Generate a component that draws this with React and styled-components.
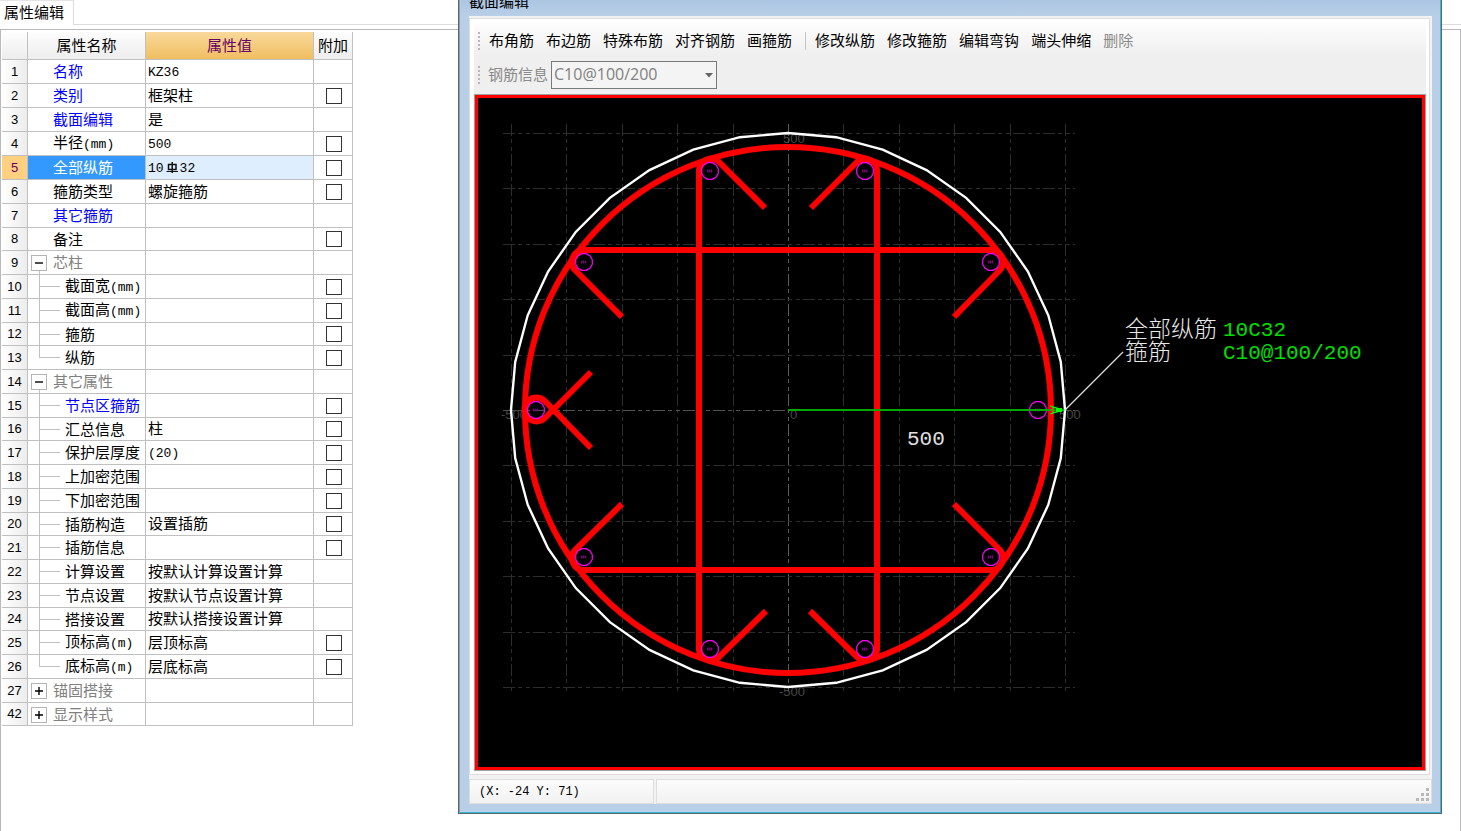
import React, { useState } from 'react';
import styled, { createGlobalStyle, css } from 'styled-components';

const rows = [
  { no: 1, name: '名称', value: 'KZ36', tone: 'link' },
  { no: 2, name: '类别', value: '框架柱', tone: 'link', check: true },
  { no: 3, name: '截面编辑', value: '是', tone: 'link' },
  { no: 4, name: '半径', unit: '(mm)', value: '500', check: true },
  { no: 5, name: '全部纵筋', rebar: ['10', '32'], check: true, selected: true },
  { no: 6, name: '箍筋类型', value: '螺旋箍筋', check: true },
  { no: 7, name: '其它箍筋', tone: 'link' },
  { no: 8, name: '备注', check: true },
  { no: 9, name: '芯柱', tone: 'group', open: true },
  { no: 10, name: '截面宽', unit: '(mm)', branch: 'mid', check: true },
  { no: 11, name: '截面高', unit: '(mm)', branch: 'mid', check: true },
  { no: 12, name: '箍筋', branch: 'mid', check: true },
  { no: 13, name: '纵筋', branch: 'last', check: true },
  { no: 14, name: '其它属性', tone: 'group', open: true },
  { no: 15, name: '节点区箍筋', tone: 'link', branch: 'mid', check: true },
  { no: 16, name: '汇总信息', value: '柱', branch: 'mid', check: true },
  { no: 17, name: '保护层厚度', value: '(20)', branch: 'mid', check: true },
  { no: 18, name: '上加密范围', branch: 'mid', check: true },
  { no: 19, name: '下加密范围', branch: 'mid', check: true },
  { no: 20, name: '插筋构造', value: '设置插筋', branch: 'mid', check: true },
  { no: 21, name: '插筋信息', branch: 'mid', check: true },
  { no: 22, name: '计算设置', value: '按默认计算设置计算', branch: 'mid' },
  { no: 23, name: '节点设置', value: '按默认节点设置计算', branch: 'mid' },
  { no: 24, name: '搭接设置', value: '按默认搭接设置计算', branch: 'mid' },
  { no: 25, name: '顶标高', unit: '(m)', value: '层顶标高', branch: 'mid', check: true },
  { no: 26, name: '底标高', unit: '(m)', value: '层底标高', branch: 'last', check: true },
  { no: 27, name: '锚固搭接', tone: 'group', open: false },
  { no: 42, name: '显示样式', tone: 'group', open: false },
];

const drawTools = ['布角筋', '布边筋', '特殊布筋', '对齐钢筋', '画箍筋'];
const editTools = ['修改纵筋', '修改箍筋', '编辑弯钩', '端头伸缩'];

// section geometry, origin at the column centre
const GRID = [-277, -222, -166, -111, -55, 0, 55, 111, 166, 222, 277];
const BARS = [
  [-78, -239], [77, -239], [-204, -148], [203, -148], [-252, 0],
  [250, 0], [-204, 147], [203, 147], [-78, 239], [77, 239],
];

const ngon = (r, n, start = 0) =>
  Array.from({ length: n }, (_, i) => {
    const a = ((i * 360) / n + start) * (Math.PI / 180);
    return `${(r * Math.cos(a)).toFixed(1)},${(r * Math.sin(a)).toFixed(1)}`;
  }).join(' ');

function Section() {
  return (
    <Drawing viewBox="-310 -312 944 669" preserveAspectRatio="xMinYMin meet">
      <g stroke="#2d2d2d" strokeWidth="1" strokeDasharray="12 3 4 4 4 3" shapeRendering="crispEdges">
        {GRID.map(p => (
          <line key={'v' + p} x1={p} x2={p} y1="-286" y2="282" stroke={p === 0 ? '#5c5c5c' : undefined} />
        ))}
        {GRID.map(p => (
          <line key={'h' + p} x1="-285" x2="287" y1={p} y2={p} stroke={p === 0 ? '#505050' : undefined} />
        ))}
      </g>
      <AxisText>
        <tspan x="-5" y="-267">500</tspan>
        <tspan x="2" y="9">0</tspan>
        <tspan x="-287" y="9">-500</tspan>
        <tspan x="271" y="9">500</tspan>
        <tspan x="-9" y="286">-500</tspan>
      </AxisText>
      <polygon points={ngon(277, 36)} fill="none" stroke="#fff" strokeWidth="2.4" />
      <g fill="none" stroke="#f00" strokeWidth="6">
        <circle r="263" />
        <path d="M-23-202L-70-249A12 12 0 0 0-89-240V240A12 12 0 0 0-70 248L-22 201" />
        <path d="M23-202L70-249A12 12 0 0 1 89-240V240A12 12 0 0 1 70 248L22 201" />
        <path d="M-166-93L-213-140A12 12 0 0 1-204-160H203A12 12 0 0 1 212-140L166-93" />
        <path d="M-166 94L-213 140A12 12 0 0 0-204 160H203A12 12 0 0 0 212 140L166 94" />
        <path d="M-197-38L-243 8A12 12 0 1 1-243-9L-197 38" />
      </g>
      {BARS.map(([x, y]) => (
        <g key={x + '/' + y} transform={`translate(${x} ${y})`} fill="none">
          <polygon points={ngon(8.6, 12, 15)} stroke="#f0f" strokeWidth="1.2" />
          <path d="M-2.5-1.5v3M-.5-1.5v3M1.5-1.5v3M-2.5 0H2.5" stroke="#800080" strokeWidth="1" />
        </g>
      ))}
      <path d="M0 0H262" stroke="#00a800" strokeWidth="2" />
      <path d="M262-4L269-2M262 4L269 2M264-2H270M264 2H270M262 0H277" stroke="#0f0" strokeWidth="1.2" fill="none" />
      <path d="M268-2H274V2H268z" fill="#0f0" />
      <path d="M277 0L335-58" stroke="#ddd" strokeWidth="1.2" />
      <NoteText>
        <tspan x="337" y="-73">全部纵筋</tspan>
        <tspan x="337" y="-50">箍筋</tspan>
      </NoteText>
      <ValueText>
        <tspan x="435" y="-74">10C32</tspan>
        <tspan x="435" y="-51">C10@100/200</tspan>
      </ValueText>
      <ValueText $white x="119" y="35">500</ValueText>
    </Drawing>
  );
}

function PropertyRow({ row }) {
  const [on, setOn] = useState(false);
  const latin = row.value && /^[\x20-\x7e]+$/.test(row.value);
  const branch = row.open ? 'first' : row.branch;

  return (
    <tr>
      <RowHead scope="row" $selected={row.selected}>{row.no}</RowHead>
      <NameCell $tone={row.tone} $branch={branch} $selected={row.selected}>
        {row.tone === 'group' && (
          <Toggle type="button" aria-expanded={row.open} aria-label={row.name}>
            <svg width="14" height="14" viewBox="0 0 14 14" stroke="#000" strokeWidth="1.4">
              <path d={row.open ? 'M3 7h8' : 'M3 7h8M7 3v8'} />
            </svg>
          </Toggle>
        )}
        {row.name}
        {row.unit && <Latin>{row.unit}</Latin>}
      </NameCell>
      <ValueCell $selected={row.selected}>
        {row.rebar && (
          <Latin>
            {row.rebar[0]}
            <RebarMark viewBox="0 0 16 14" role="img" aria-label="C">
              <path d="M4.500 3.500h7.500v5h-7.500zM8.200 1v11" />
              <path d="M2.500 10.500h11.500" strokeWidth="1" />
            </RebarMark>
            {row.rebar[1]}
          </Latin>
        )}
        {latin ? <Latin>{row.value}</Latin> : row.value}
      </ValueCell>
      <CheckCell>
        {row.check && (
          <Check type="checkbox" aria-label={`附加 ${row.name}`} checked={on} onChange={() => setOn(!on)} />
        )}
      </CheckCell>
    </tr>
  );
}

export default function App() {
  return (
    <Page>
      <Global />
      <TabBar role="tablist">
        <Tab type="button" role="tab" aria-selected="true">属性编辑</Tab>
      </TabBar>
      <Panel>
        <Table>
          <colgroup>
            <Col $w={26} />
            <Col $w={118} />
            <Col $w={168} />
            <Col $w={39} />
          </colgroup>
          <thead>
            <tr>
              <Head aria-label="序号" />
              <Head scope="col">属性名称</Head>
              <Head scope="col" $active>属性值</Head>
              <Head scope="col">附加</Head>
            </tr>
          </thead>
          <tbody>
            {rows.map(row => <PropertyRow key={row.no} row={row} />)}
          </tbody>
        </Table>
      </Panel>

      <Dialog role="dialog" aria-label="截面编辑">
        <TitleBar>截面编辑</TitleBar>
        <Client>
          <Frame>
            <Toolbars>
              <Toolbar>
                <Grip />
                {drawTools.map(t => <Tool key={t} type="button">{t}</Tool>)}
                <Separator />
                {editTools.map(t => <Tool key={t} type="button">{t}</Tool>)}
                <Tool type="button" disabled>删除</Tool>
              </Toolbar>
              <Toolbar>
                <Grip />
                <Label htmlFor="rebar">钢筋信息</Label>
                <SelectWrap>
                  <Select id="rebar" disabled>
                    <option>C10@100/200</option>
                  </Select>
                  <Arrow viewBox="0 0 8 5"><path d="M0 0h8L4 4.500z" fill="#666" /></Arrow>
                </SelectWrap>
              </Toolbar>
            </Toolbars>
            <Canvas>
              <Section />
            </Canvas>
          </Frame>
          <StatusBar>
            <Status $w={185}>(X: -24 Y: 71)</Status>
            <Status>
              <SizeGrip viewBox="0 0 13 13" fill="#b8b8b8">
                <path d="M10 0h3v3h-3zM5 5h3v3h-3zM10 5h3v3h-3zM0 10h3v3h-3zM5 10h3v3h-3zM10 10h3v3h-3z" />
              </SizeGrip>
            </Status>
          </StatusBar>
        </Client>
      </Dialog>
    </Page>
  );
}

const mono = '"Liberation Mono", "Noto Sans CJK SC", monospace';
const sans = '"Liberation Sans", "Noto Sans CJK SC", sans-serif';

const Global = createGlobalStyle`
* { box-sizing: border-box; }
body { margin: 0; background: #fff; }
button, select, input { font: inherit; color: inherit; margin: 0; }
`
const Page = styled.div`
display: flex;
flex-direction: column;
position: relative;
min-height: 100vh;
overflow: hidden;
font: 15px/20px ${sans};
color: #000;
`
const TabBar = styled.div`
display: flex;
height: 25px;

&::after {
  content: "";
  flex: 1;
  border-bottom: 1px solid #dcdcdc;
}
`
const Tab = styled.button`
border: 0;
border-top: 1px solid #e4e4e4;
border-right: 1px solid #dcdcdc;
background: #fff;
padding: 0 9px 0 4px;
`
const Panel = styled.div`
flex: 1;
margin-top: 4px;
padding: 2px 1px;
border: 1px solid #b8b8be;
border-bottom: 0;
`
const Table = styled.table`
table-layout: fixed;
width: 351px;
border-collapse: separate;
border-spacing: 0;

th, td {
  border: 0 solid #c0c0c0;
  border-width: 0 1px 1px 0;
  font-weight: normal;
  white-space: nowrap;
}
tbody tr { height: 24px; }
tbody tr:nth-child(4n) { height: 23px; }
`
const Col = styled.col`
width: ${p => p.$w}px;
`
const Head = styled.th`
height: 28px;
padding: 0;
color: ${p => (p.$active ? '#660066' : '#000')};
background: ${p => (p.$active
    ? 'linear-gradient(#f9d99c, #f0be60)'
    : 'linear-gradient(#fdfdfd, #ededed)')};
`
const RowHead = styled.th`
padding: 0;
font-size: 13px;
color: ${p => (p.$selected ? '#660066' : '#000')};
background: ${p => (p.$selected ? '#ffd080' : 'linear-gradient(90deg, #fff, #ececec)')};
`
const tones = { link: '#0000ff', group: '#808080' };

// tree lines are painted behind the text: a stem plus a short arm
const branches = {
  first: css`
    background: linear-gradient(#c0c0c0, #c0c0c0) 11px 100% / 1px 4px no-repeat;
  `,
  mid: css`
    background:
      linear-gradient(#c0c0c0, #c0c0c0) 11px 0 / 1px 100% no-repeat,
      linear-gradient(#c0c0c0, #c0c0c0) 11px 50% / 21px 1px no-repeat;
  `,
  last: css`
    background:
      linear-gradient(#c0c0c0, #c0c0c0) 11px 0 / 1px 50% no-repeat,
      linear-gradient(#c0c0c0, #c0c0c0) 11px 50% / 21px 1px no-repeat;
  `,
};

const NameCell = styled.td`
padding: 1px 0 0 ${p => (p.$tone === 'group' ? 3 : p.$branch ? 37 : 25)}px;
color: ${p => (p.$selected ? '#fff' : tones[p.$tone] || '#000')};
${p => branches[p.$branch]}
${p => p.$selected && 'background: #3399ff;'}
`
const ValueCell = styled.td`
padding: 0 0 0 2px;
${p => p.$selected && 'background: #deeeff;'}
`
const CheckCell = styled.td`
padding: 0 0 0 2px;
text-align: center;
`
const Latin = styled.span`
font: 13px/20px ${mono};
`
const RebarMark = styled.svg`
width: 16px;
height: 14px;
vertical-align: -3px;
fill: none;
stroke: #111;
stroke-width: 1.5;
`
const Toggle = styled.button`
width: 16px;
height: 16px;
margin-right: 6px;
padding: 0;
border: 1px solid #b4b4b4;
background: #fff;
vertical-align: -2px;

svg { display: block; }
`
const Check = styled.input`
appearance: none;
display: block;
width: 16px;
height: 16px;
margin: 0 auto;
border: 1px solid #333;
background: #fff;

&:checked { background: #333; box-shadow: inset 0 0 0 3px #fff; }
`

const Dialog = styled.section`
position: absolute;
top: -13px;
right: 19px;
bottom: 17px;
left: 458px;
display: flex;
flex-direction: column;
padding: 0 9px 9px 10px;
border: 1px solid #5c6670;
border-top: 0;
background: #b9cfe8;
box-shadow: inset 1px 0 #8d9aa8, inset -1px -1px #35b8d8;
`
const TitleBar = styled.header`
height: 29px;
line-height: 29px;
margin: 0 -8px;
padding: 0 8px;
background: linear-gradient(#a0bddd, #b9cfe8);
`
const Client = styled.div`
flex: 1;
min-height: 0;
display: flex;
flex-direction: column;
background: #f2f2f2;
`
const Frame = styled.div`
flex: 1;
min-height: 0;
display: flex;
flex-direction: column;
margin: 2px 2px 0 0;
padding: 4px 3px 3px 4px;
border: 1px solid #dedede;
background: #fff;
`
const Toolbars = styled.div`
padding-bottom: 2px;
background: linear-gradient(#fdfdfd, #efefef 45%);
`
const Toolbar = styled.div`
display: flex;
align-items: center;
height: 35px;
padding-left: 4px;

& + & { height: 34px; }
`
const Grip = styled.span`
width: 2px;
height: 18px;
margin-right: 3px;
background: repeating-linear-gradient(#b8b8b8 0 2px, transparent 2px 4px);
`
const Tool = styled.button`
border: 0;
padding: 0 6px;
background: none;

&:disabled { color: #8a8a8a; }
`
const Separator = styled.span`
width: 1px;
height: 18px;
margin: 0 3px 0 7px;
background: #c4c4c4;
`
const Label = styled.label`
padding: 0 3px 0 5px;
color: #8a8a8a;
`
const SelectWrap = styled.div`
position: relative;
width: 166px;
`
const Select = styled.select`
appearance: none;
display: block;
width: 100%;
height: 28px;
padding: 0 20px 2px 2px;
border: 1px solid #7a7a7a;
border-radius: 0;
background: #f4f4f4;
font: 16px "Open Sans", sans-serif;
color: #808080;
opacity: 1;
`
const Arrow = styled.svg`
position: absolute;
top: 12px;
right: 4px;
width: 8px;
height: 5px;
pointer-events: none;
`
const Canvas = styled.div`
flex: 1;
min-height: 0;
display: flex;
border: 3px solid #f00;
outline: 1px solid #a0a0a0;
margin: 1px;
background: #000;
`
const Drawing = styled.svg`
flex: 1;
min-width: 0;
min-height: 0;
`
const AxisText = styled.text`
font: 13px "Liberation Sans", sans-serif;
fill: #484848;
`
const NoteText = styled.text`
font: 300 23px "Noto Sans CJK SC", sans-serif;
fill: #e8e8e8;
`
const ValueText = styled.text`
font: 21px ${mono};
fill: ${p => (p.$white ? '#e0e0e0' : '#00e000')};
`
const StatusBar = styled.footer`
display: flex;
gap: 2px;
height: 25px;
margin-top: 4px;
`
const Status = styled.div`
display: flex;
align-items: center;
${p => (p.$w ? `width: ${p.$w}px;` : 'flex: 1; justify-content: flex-end;')}
padding: 0 2px 0 9px;
border: 1px solid #dedede;
background: linear-gradient(#fcfcfc, #f1f1f1);
font: 12px/20px ${mono};
`
const SizeGrip = styled.svg`
align-self: flex-end;
width: 13px;
height: 13px;
margin-bottom: 2px;
`
